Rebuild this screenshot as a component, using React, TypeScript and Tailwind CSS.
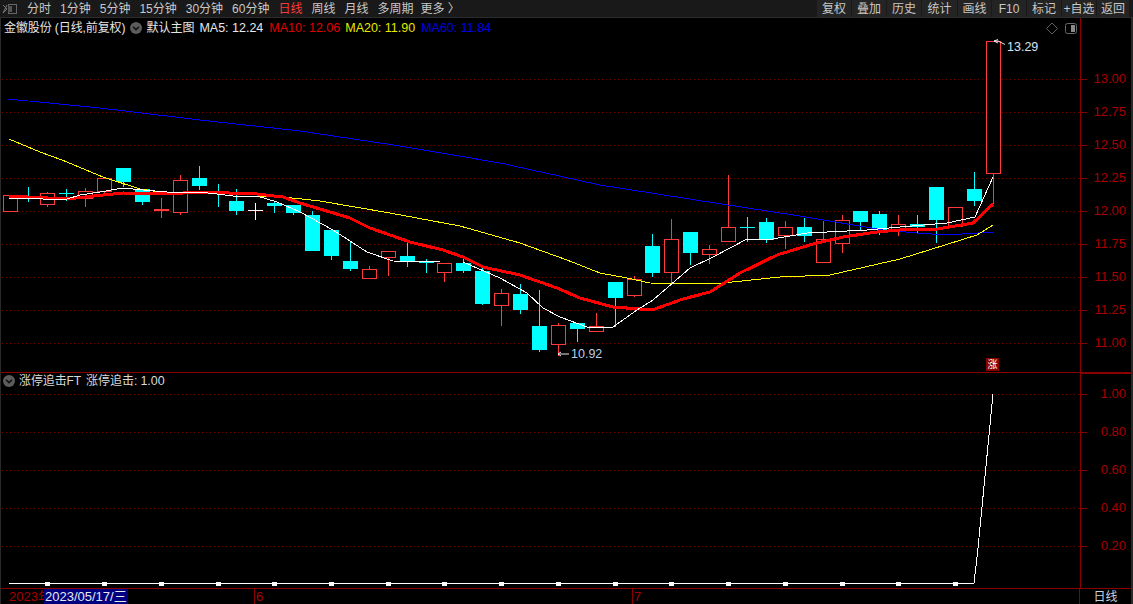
import React from 'react';

type Candle = [number, number, number, number, 'r' | 'c' | 'w'];

// body top, body bottom, wick top, wick bottom, colour (all in chart pixels)
const candles: Candle[] = [
  [195, 211, 195, 211, 'r'], [196, 198, 187, 202, 'c'], [193, 204, 192, 207, 'r'], [193, 194, 189, 201, 'c'],
  [191, 198, 188, 207, 'r'], [178, 191, 178, 195, 'r'], [168, 182, 168, 187, 'c'], [189, 202, 189, 205, 'c'],
  [209, 211, 198, 218, 'r'], [180, 212, 175, 215, 'r'], [178, 186, 166, 190, 'c'], [192, 194, 184, 207, 'c'],
  [201, 211, 189, 215, 'c'], [210, 211, 203, 220, 'w'], [203, 206, 201, 213, 'c'], [205, 213, 205, 215, 'c'],
  [215, 251, 211, 251, 'c'], [230, 256, 230, 260, 'c'], [261, 269, 242, 271, 'c'], [269, 278, 266, 278, 'r'],
  [251, 257, 251, 276, 'r'], [256, 261, 242, 267, 'c'], [261, 263, 259, 273, 'c'], [263, 272, 263, 282, 'r'],
  [263, 271, 259, 273, 'c'], [271, 304, 268, 305, 'c'], [293, 305, 289, 326, 'r'], [294, 310, 284, 314, 'c'],
  [326, 350, 290, 352, 'c'], [325, 344, 323, 356, 'r'], [323, 329, 323, 342, 'c'], [326, 331, 313, 331, 'r'],
  [282, 298, 282, 327, 'c'], [279, 295, 276, 297, 'r'], [246, 273, 234, 277, 'c'], [239, 272, 219, 283, 'r'],
  [232, 253, 232, 265, 'c'], [249, 254, 245, 264, 'r'], [227, 241, 175, 241, 'r'], [227, 228, 217, 242, 'c'],
  [222, 240, 218, 243, 'c'], [227, 235, 221, 249, 'r'], [227, 236, 218, 242, 'c'], [239, 262, 221, 262, 'r'],
  [220, 243, 215, 253, 'r'], [211, 222, 211, 230, 'c'], [214, 230, 211, 235, 'c'], [224, 230, 215, 236, 'r'],
  [224, 227, 215, 234, 'c'], [187, 220, 187, 243, 'c'], [207, 226, 207, 226, 'r'], [189, 201, 172, 206, 'c'],
  [41, 173, 41, 204, 'r'],
];

const ma5 = '9,199 23,198 43,199 67,199 80,195 100,192 123,188 143,190 167,192 200,192 233,196 257,196 277,202 300,212 333,230 367,252 393,261 440,262 463,262 500,278 527,293 543,308 560,317 587,327 613,327 637,310 653,300 690,268 713,257 747,239 767,240 807,233 867,230 900,227 947,223 975,217 993,177';
const ma10 = '9,196 28,197 67,199 103,195 123,193 167,194 200,192 257,194 283,197 300,203 350,218 370,228 410,242 443,250 463,257 483,267 520,275 557,288 580,298 613,307 640,309 655,309 683,299 710,292 740,273 777,255 813,244 843,237 877,232 900,230 937,229 973,223 993,204';
const ma20 = '9,139 40,152 62,160 103,177 140,189 160,192 200,192 233,196 283,197 320,201 390,213 460,226 520,243 567,260 600,273 627,278 650,283 713,284 780,277 830,275 900,259 977,235 993,225';
const ma60 = '8,99 100,108 200,120 300,131 400,146 500,163 600,185 728,205 800,216 883,230 917,233 947,235 993,232';

const priceTicks = [
  [79, '13.00'], [112, '12.75'], [145, '12.50'], [178, '12.25'], [211, '12.00'], [244, '11.75'], [277, '11.50'], [310, '11.25'], [343, '11.00'],
] as const;
const signalTicks = [
  [394, '1.00'], [432, '0.80'], [470, '0.60'], [508, '0.40'], [546, '0.20'],
] as const;

const periods = ['分时', '1分钟', '5分钟', '15分钟', '30分钟', '60分钟', '日线', '周线', '月线', '多周期'];
const tools: [string, string][] = [
  ['复权', 'w-[34px]'], ['叠加', 'w-[34px]'], ['历史', 'w-[34px]'], ['统计', 'w-[35px]'], ['画线', 'w-[33px]'],
  ['F10', 'w-[34px]'], ['标记', 'w-[34px]'], ['+自选', 'w-[34px]'], ['返回', 'w-[32px]'],
];

const font = { fontFamily: '"Liberation Sans", "Noto Sans CJK SC", sans-serif' };

const cx = (i: number) => 9.5 + i * 18.91;
const RED = '#ff3a3a';
const CYAN = '#00ffff';

const Chevron = () => (
  <svg width="12" height="12" viewBox="0 0 12 12" className="shrink-0">
    <circle cx="6" cy="6" r="6" fill="#5c5c5c" />
    <path d="M3 4.8 L6 7.6 L9 4.8" fill="none" stroke="#111" strokeWidth="1.5" />
  </svg>
);

const MainChart = () => (
  <svg width="1080" height="354" viewBox="0 18 1080 354" className="block">
    {priceTicks.map(([y]) => (
      <line key={y} x1="2" x2="1080" y1={y + 0.5} y2={y + 0.5} stroke="#700000" strokeDasharray="1 3" shapeRendering="crispEdges" />
    ))}
    {candles.map(([top, bottom, wt, wb, c], i) => {
      const x = Math.round(cx(i));
      if (c === 'r') {
        return (
          <g key={i} stroke={RED} fill="#000" shapeRendering="crispEdges">
            <line x1={x + 0.5} x2={x + 0.5} y1={wt} y2={top} />
            <line x1={x + 0.5} x2={x + 0.5} y1={bottom} y2={wb} />
            {bottom - top > 2 ? (
              <rect x={x - 7 + 0.5} y={top + 0.5} width={14} height={bottom - top} />
            ) : (
              <rect x={x - 7} y={top} width={15} height={2} fill={RED} stroke="none" />
            )}
          </g>
        );
      }
      const color = c === 'c' ? CYAN : '#ffffff';
      return (
        <g key={i}>
          <rect x={x} y={wt} width={1} height={wb - wt} fill={color} />
          <rect x={x - 7} y={top} width={15} height={bottom - top} fill={color} />
        </g>
      );
    })}
    <polyline points={ma60} fill="none" stroke="#0000ff" strokeWidth="1" shapeRendering="crispEdges" />
    <polyline points={ma20} fill="none" stroke="#ffff00" strokeWidth="1" shapeRendering="crispEdges" />
    <polyline points={ma10} fill="none" stroke="#ff0000" strokeWidth="3" shapeRendering="crispEdges" />
    <polyline points={ma5} fill="none" stroke="#ffffff" strokeWidth="1" shapeRendering="crispEdges" />
    {/* high / low price arrows */}
    <path d="M994 41 l4 -1.500 M994 41 l4 2 M994 41 h4 l7 3.500" fill="none" stroke="#e8e8e8" />
    <path d="M558 354 h11 M558 354 l3 -2 M558 354 l3 2" fill="none" stroke="#e8e8e8" />
    {/* draw tool icons top right */}
    <path d="M1052 23 l5.500 5.500 l-5.500 5.500 l-5.500 -5.500 z" fill="none" stroke="#5e5e5e" />
    <rect x="1065.500" y="23.500" width="11" height="10" rx="2" fill="none" stroke="#6a6a6a" />
    <rect x="1071" y="25" width="4" height="7" fill="#8a8a8a" />
  </svg>
);

const SignalChart = () => {
  const squares = Array.from({ length: 17 }, (_, k) => Math.round(cx(2 + k * 3)));
  return (
    <svg width="1080" height="215" viewBox="0 373 1080 215" className="block">
      {signalTicks.map(([y]) => (
        <line key={y} x1="2" x2="1080" y1={y + 0.5} y2={y + 0.5} stroke="#700000" strokeDasharray="1 3" shapeRendering="crispEdges" />
      ))}
      <polyline points="9,583.500 974,583.500 978,548 993,394" fill="none" stroke="#ffffff" strokeWidth="1" shapeRendering="crispEdges" />
      {squares.map((x) => (
        <rect key={x} x={x - 2} y={582} width={5} height={4} fill="#ffffff" />
      ))}
    </svg>
  );
};

const Axis = ({ ticks, top }: { ticks: readonly (readonly [number, string])[]; top: number }) => (
  <div className="relative flex-1 border-l border-[#8a0000]">
    {ticks.map(([y, label]) => (
      <div key={label} className="absolute left-0 right-0" style={{ top: y - top - 8 }}>
        <div className="flex items-center h-4">
          <div className="w-[6px] h-px bg-[#8a0000]" />
          <span className="ml-auto mr-[7px] text-[13px] leading-4 text-[#a80000]">{label}</span>
        </div>
      </div>
    ))}
  </div>
);

export default function App() {
  return (
    <div className="relative w-[1133px] h-[604px] bg-black overflow-hidden flex flex-col text-[12px]" style={font}>
      <div className="h-[18px] shrink-0 flex items-stretch bg-[#191919] text-[#c8c8c8] border-b border-[#2c2c2c]">
        <div className="w-[27px] shrink-0 flex items-center pl-[2px]">
          <svg width="15" height="12" viewBox="0 0 15 12">
            <path d="M1 2 l4 4 l-4 4 M5 2 l-4 8" fill="none" stroke="#777" />
            <rect x="6.500" y="1.500" width="8" height="9" fill="none" stroke="#666" />
            <rect x="6" y="3" width="4" height="6" fill="#555" />
          </svg>
        </div>
        <div className="flex items-center gap-[9px] leading-none whitespace-nowrap">
          {periods.map((p) => (
            <span key={p} className={p === '日线' ? 'text-[#ff3a3a]' : ''}>{p}</span>
          ))}
          <span className="-ml-[2px]">更多 〉</span>
        </div>
        <div className="ml-auto mr-[4px] flex items-stretch gap-px">
          {tools.map(([t, w]) => (
            <div key={t} className={`${w} flex items-center justify-center bg-[#242424] leading-none whitespace-nowrap`}>{t}</div>
          ))}
        </div>
      </div>

      <div className="h-[355px] shrink-0 flex border-b border-[#8a0000] relative">
        <div className="w-[1080px] shrink-0 relative">
          <MainChart />
          <div className="absolute left-[4px] top-[2px] flex items-center whitespace-nowrap leading-4 text-[#e6e6e6]">
            <span className="tracking-[-0.1px]">金徽股份 (日线,前复权)</span>
            <span className="ml-[5px] mr-[4px]"><Chevron /></span>
            <span>默认主图</span>
            <span className="ml-[5px] text-[12.5px] text-[#e8e8e8]">MA5: 12.24</span>
            <span className="ml-[6px] text-[12.5px] text-[#e00000]">MA10: 12.06</span>
            <span className="ml-[5px] text-[12.5px] text-[#e8e800]">MA20: 11.90</span>
            <span className="ml-[6px] text-[12.5px] text-[#0000e0]">MA60: 11.84</span>
          </div>
          <span className="absolute left-[1007px] top-[21px] text-[12.5px] leading-4 text-[#d8e4f0]">13.29</span>
          <span className="absolute left-[571px] top-[328px] text-[12.5px] leading-4 text-[#b8d0ea]">10.92</span>
          <span className="absolute left-[986px] top-[340px] w-[13px] h-[13px] bg-[#8a0000] text-white text-[10px] leading-[13px] text-center">涨</span>
        </div>
        <Axis ticks={priceTicks} top={18} />
      </div>

      <div className="h-[216px] shrink-0 flex border-b border-[#8a0000] relative">
        <div className="w-[1080px] shrink-0 relative">
          <SignalChart />
          <div className="absolute left-[3px] top-[0px] flex items-center whitespace-nowrap leading-4 text-[#d8d8d8]">
            <Chevron />
            <span className="ml-[4px] tracking-[-0.1px]">涨停追击FT</span>
            <span className="ml-[5px]">涨停追击:</span>
            <span className="ml-[3px] text-[12.5px]">1.00</span>
          </div>
        </div>
        <div className="flex-1 flex border-t border-[#8a0000]">
          <Axis ticks={signalTicks} top={374} />
        </div>
      </div>

      <div className="flex-1 flex text-[13px] leading-[15px] text-[#a80000]">
        <div className="w-[1080px] shrink-0 relative border-r border-[#8a0000]">
          <span className="absolute left-[9px] top-0 w-[35px] overflow-hidden whitespace-nowrap">2023年</span>
          <span className="absolute left-[44px] top-0 w-[84px] h-[15px] bg-[#000080] text-[#e8e8e8] pl-px">2023/05/17/三</span>
          <span className="absolute left-[254px] top-0 border-l border-[#8a0000] pl-[1px]">6</span>
          <span className="absolute left-[632px] top-0 border-l border-[#8a0000] pl-[1px]">7</span>
        </div>
        <div className="flex-1 text-center pr-[2px] text-[12px] text-[#c8d4e0] leading-4">日线</div>
      </div>

      <div className="absolute left-0 top-[18px] bottom-0 w-px bg-[#2a2a2a]" />
      <div className="absolute right-0 top-[18px] bottom-0 w-[2px] bg-[#2a2a2a]" />
    </div>
  );
}
